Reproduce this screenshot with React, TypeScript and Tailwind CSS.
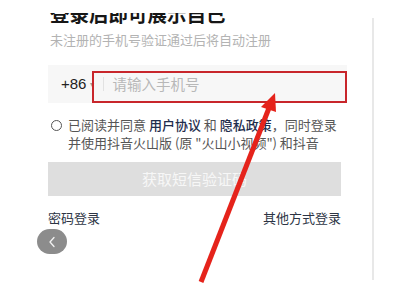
export default function App() {
  return (
    <div
      className="relative h-[300px] w-[400px] overflow-hidden bg-white"
      style={{ fontFamily: '"Noto Sans CJK SC", "Noto Sans", sans-serif' }}
    >
      <div className="flex h-[281px] w-[375px]">
        {/* Login screen */}
        <div className="flex w-[372px] flex-col pl-[48px]">
          {/* Title, cut off at the top of the screenshot */}
          <div className="mt-[13px] h-[11px] overflow-hidden pl-[2px]">
            <div className="-mt-[9px] text-[19.5px] font-bold leading-[20px] text-[#161616]">
              登录后即可展示自己
            </div>
          </div>
          <p className="mt-[7px] pl-[2px] text-[13px] leading-[18px] text-[#b3b3b3]">
            未注册的手机号验证通过后将自动注册
          </p>

          {/* Phone input */}
          <div className="relative mt-[16px] flex h-[38px] w-[299px] items-center bg-[#f7f7f7] pl-[13px]">
            <span
              className="text-[15px] leading-[18px] text-[#222]"
              style={{ fontFamily: '"Liberation Sans", Arial, sans-serif' }}
            >
              +86
            </span>
            <span className="ml-[4px] text-[8px] text-[#999]">▾</span>
            <span className="ml-[9px] h-[14px] w-px bg-[#e2e2e2]" />
            <span className="ml-[8px] text-[14.5px] leading-[18px] text-[#b8b8b8]">请输入手机号</span>
            <div className="absolute left-[44px] top-[6px] h-[32px] w-[255px] border-[2.5px] border-[#c8262b]" />
          </div>

          {/* Agreement */}
          <div className="mt-[13px] flex w-[299px] items-start">
            <span className="ml-[3px] mt-[4px] h-[11px] w-[11px] shrink-0 rounded-full border-[1.5px] border-[#555]" />
            <p className="ml-[6px] text-[13px] leading-[18px] text-[#555]">
              已阅读并同意 <span className="font-medium text-[#1f2d4d]">用户协议</span> 和{' '}
              <span className="font-medium text-[#1f2d4d]">隐私政策</span>，同时登录
              <br />
              并使用抖音火山版 (原 "火山小视频") 和抖音
            </p>
          </div>

          {/* Send code button */}
          <button className="mt-[10px] flex h-[34px] w-[293px] items-center justify-center bg-[#dedede] text-[15px] text-[#f7f7f7]">
            获取短信验证码
          </button>

          <div className="mt-[13px] flex w-[293px] items-center justify-between text-[13px] leading-[18px] text-[#2c3444]">
            <span>密码登录</span>
            <span>其他方式登录</span>
          </div>
        </div>

        {/* Screen edge */}
        <div className="mt-[18px] h-[262px] w-[2px] bg-[#e8e8e8]" />
      </div>

      {/* Floating back button */}
      <div className="absolute left-[37px] top-[229px] flex h-[25px] w-[30px] items-center justify-center rounded-full bg-[#8c8c8c]">
        <svg width="8" height="12" viewBox="0 0 8 12" fill="none">
          <path d="M6 1.5L2 6l4 4.5" stroke="#f2f2f2" strokeWidth="1.3" strokeLinecap="round" strokeLinejoin="round" />
        </svg>
      </div>

      {/* Red annotation arrow */}
      <svg className="pointer-events-none absolute left-0 top-0" width="400" height="300" viewBox="0 0 400 300">
        <line x1="201" y1="282" x2="269" y2="108" stroke="#e5231b" strokeWidth="5" />
        <polygon points="275,93 276,112 261,107" fill="#e5231b" />
      </svg>
    </div>
  );
}
